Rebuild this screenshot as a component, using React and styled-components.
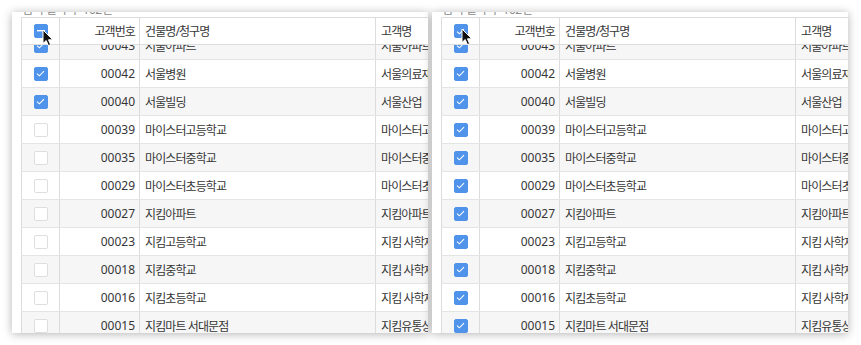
import React from "react";
import styled, { createGlobalStyle } from "styled-components";

const Global = createGlobalStyle`
  html, body { margin: 0; padding: 0; background: #ffffff; }
  body { font-family: "Noto Sans", "Noto Sans CJK KR", sans-serif; }
`;

const Page = styled.div`
  display: flex;
  gap: 4px;
  padding: 12px 0 0 12px;
  width: 861px;
  height: 345px;
  box-sizing: border-box;
`;

const Card = styled.div`
  position: relative;
  width: 416px;
  height: 321px;
  background: #fff;
  box-shadow: 0 1px 9px rgba(0, 0, 0, 0.3);
  overflow: hidden;
  flex: none;
`;

const Inner = styled.div`
  margin-top: -9px;
  padding-left: 9px;
`;

const Caption = styled.div`
  height: 14px;
  line-height: 14px;
  font-size: 12px;
  color: #8a8a8a;
  padding-left: 1px;
  letter-spacing: -0.5px;
`;

const Grid = styled.div`
  display: grid;
  grid-template-columns: 38px 80px 236px 140px;
  width: 494px;
`;

const HeaderRow = styled(Grid)`
  position: relative;
  z-index: 1;
  height: 28px;
  box-sizing: border-box;
  background: #fff;
  border-top: 1px solid #dcdcdc;
  border-bottom: 1px solid #dcdcdc;
`;

const Body = styled.div`
  margin-top: -13px;
`;

const Row = styled(Grid)`
  height: 28px;
  box-sizing: border-box;
  border-bottom: 1px solid #e4e4e4;
  background: ${(p) => (p.$alt ? "#f6f6f6" : "#ffffff")};
`;

const Cell = styled.div`
  display: flex;
  align-items: center;
  justify-content: ${(p) => (p.$align === "right" ? "flex-end" : p.$align === "center" ? "center" : "flex-start")};
  border-left: 1px solid #dcdcdc;
  padding: 0 ${(p) => (p.$align === "center" ? 0 : 4)}px 0 ${(p) => (p.$align === "center" ? 0 : 5)}px;
  font-size: 12px;
  color: #363636;
  white-space: nowrap;
  overflow: hidden;
  letter-spacing: ${(p) => (p.$ko ? "-0.9px" : "0")};
`;

const Box = styled.span`
  display: inline-flex;
  align-items: center;
  justify-content: center;
  width: 14px;
  height: 14px;
  box-sizing: border-box;
  border-radius: 2px;
  background: ${(p) => (p.$on ? "#4f93ea" : "#fff")};
  border: 1px solid ${(p) => (p.$on ? "#4f93ea" : "#dedede")};
`;

const Cursor = styled.svg`
  position: absolute;
  left: ${(p) => p.$x}px;
  top: ${(p) => p.$y}px;
  z-index: 5;
`;

function Check({ state }) {
  if (state === "indeterminate") {
    return (
      <Box $on>
        <svg width="8" height="2" viewBox="0 0 8 2">
          <rect x="0" y="0" width="8" height="1.4" fill="#fff" />
        </svg>
      </Box>
    );
  }
  if (state === "checked") {
    return (
      <Box $on>
        <svg width="9" height="7" viewBox="0 0 9 7">
          <path d="M1 3.6 L3.4 5.8 L8 1.2" fill="none" stroke="#fff" strokeWidth="1.1" />
        </svg>
      </Box>
    );
  }
  return <Box />;
}

const rows = [
  ["00043", "서울아파트", "서울아파트"],
  ["00042", "서울병원", "서울의료재단"],
  ["00040", "서울빌딩", "서울산업"],
  ["00039", "마이스터고등학교", "마이스터고등"],
  ["00035", "마이스터중학교", "마이스터중"],
  ["00029", "마이스터초등학교", "마이스터초"],
  ["00027", "지킴아파트", "지킴아파트"],
  ["00023", "지킴고등학교", "지킴 사학재단"],
  ["00018", "지킴중학교", "지킴 사학재단"],
  ["00016", "지킴초등학교", "지킴 사학재단"],
  ["00015", "지킴마트 서대문점", "지킴유통상사"],
];

function Panel({ header, checkedCount, cursor }) {
  return (
    <Card>
      <Inner>
        <Caption>검색 결과 수 102건</Caption>
        <HeaderRow>
          <Cell $align="center">
            <Check state={header} />
          </Cell>
          <Cell $align="right" $ko>고객번호</Cell>
          <Cell $ko>건물명/청구명</Cell>
          <Cell $ko>고객명</Cell>
        </HeaderRow>
        <Body>
          {rows.map((r, i) => (
            <Row key={r[0]} $alt={i % 2 === 0}>
              <Cell $align="center">
                <Check state={i < checkedCount ? "checked" : "none"} />
              </Cell>
              <Cell $align="right">{r[0]}</Cell>
              <Cell $ko>{r[1]}</Cell>
              <Cell $ko>{r[2]}</Cell>
            </Row>
          ))}
        </Body>
      </Inner>
      <Cursor $x={cursor[0]} $y={cursor[1]} width="12" height="18" viewBox="0 0 12 18">
        <path
          d="M1 1 L1 14.5 L4.2 11.5 L6.4 16.6 L8.6 15.7 L6.5 10.8 L10.8 10.8 Z"
          fill="#111"
          stroke="#fff"
          strokeWidth="1"
          strokeLinejoin="round"
        />
      </Cursor>
    </Card>
  );
}

export default function App() {
  return (
    <>
      <Global />
      <Page>
        <Panel header="indeterminate" checkedCount={3} cursor={[30, 17]} />
        <Panel header="checked" checkedCount={11} cursor={[29, 16]} />
      </Page>
    </>
  );
}
